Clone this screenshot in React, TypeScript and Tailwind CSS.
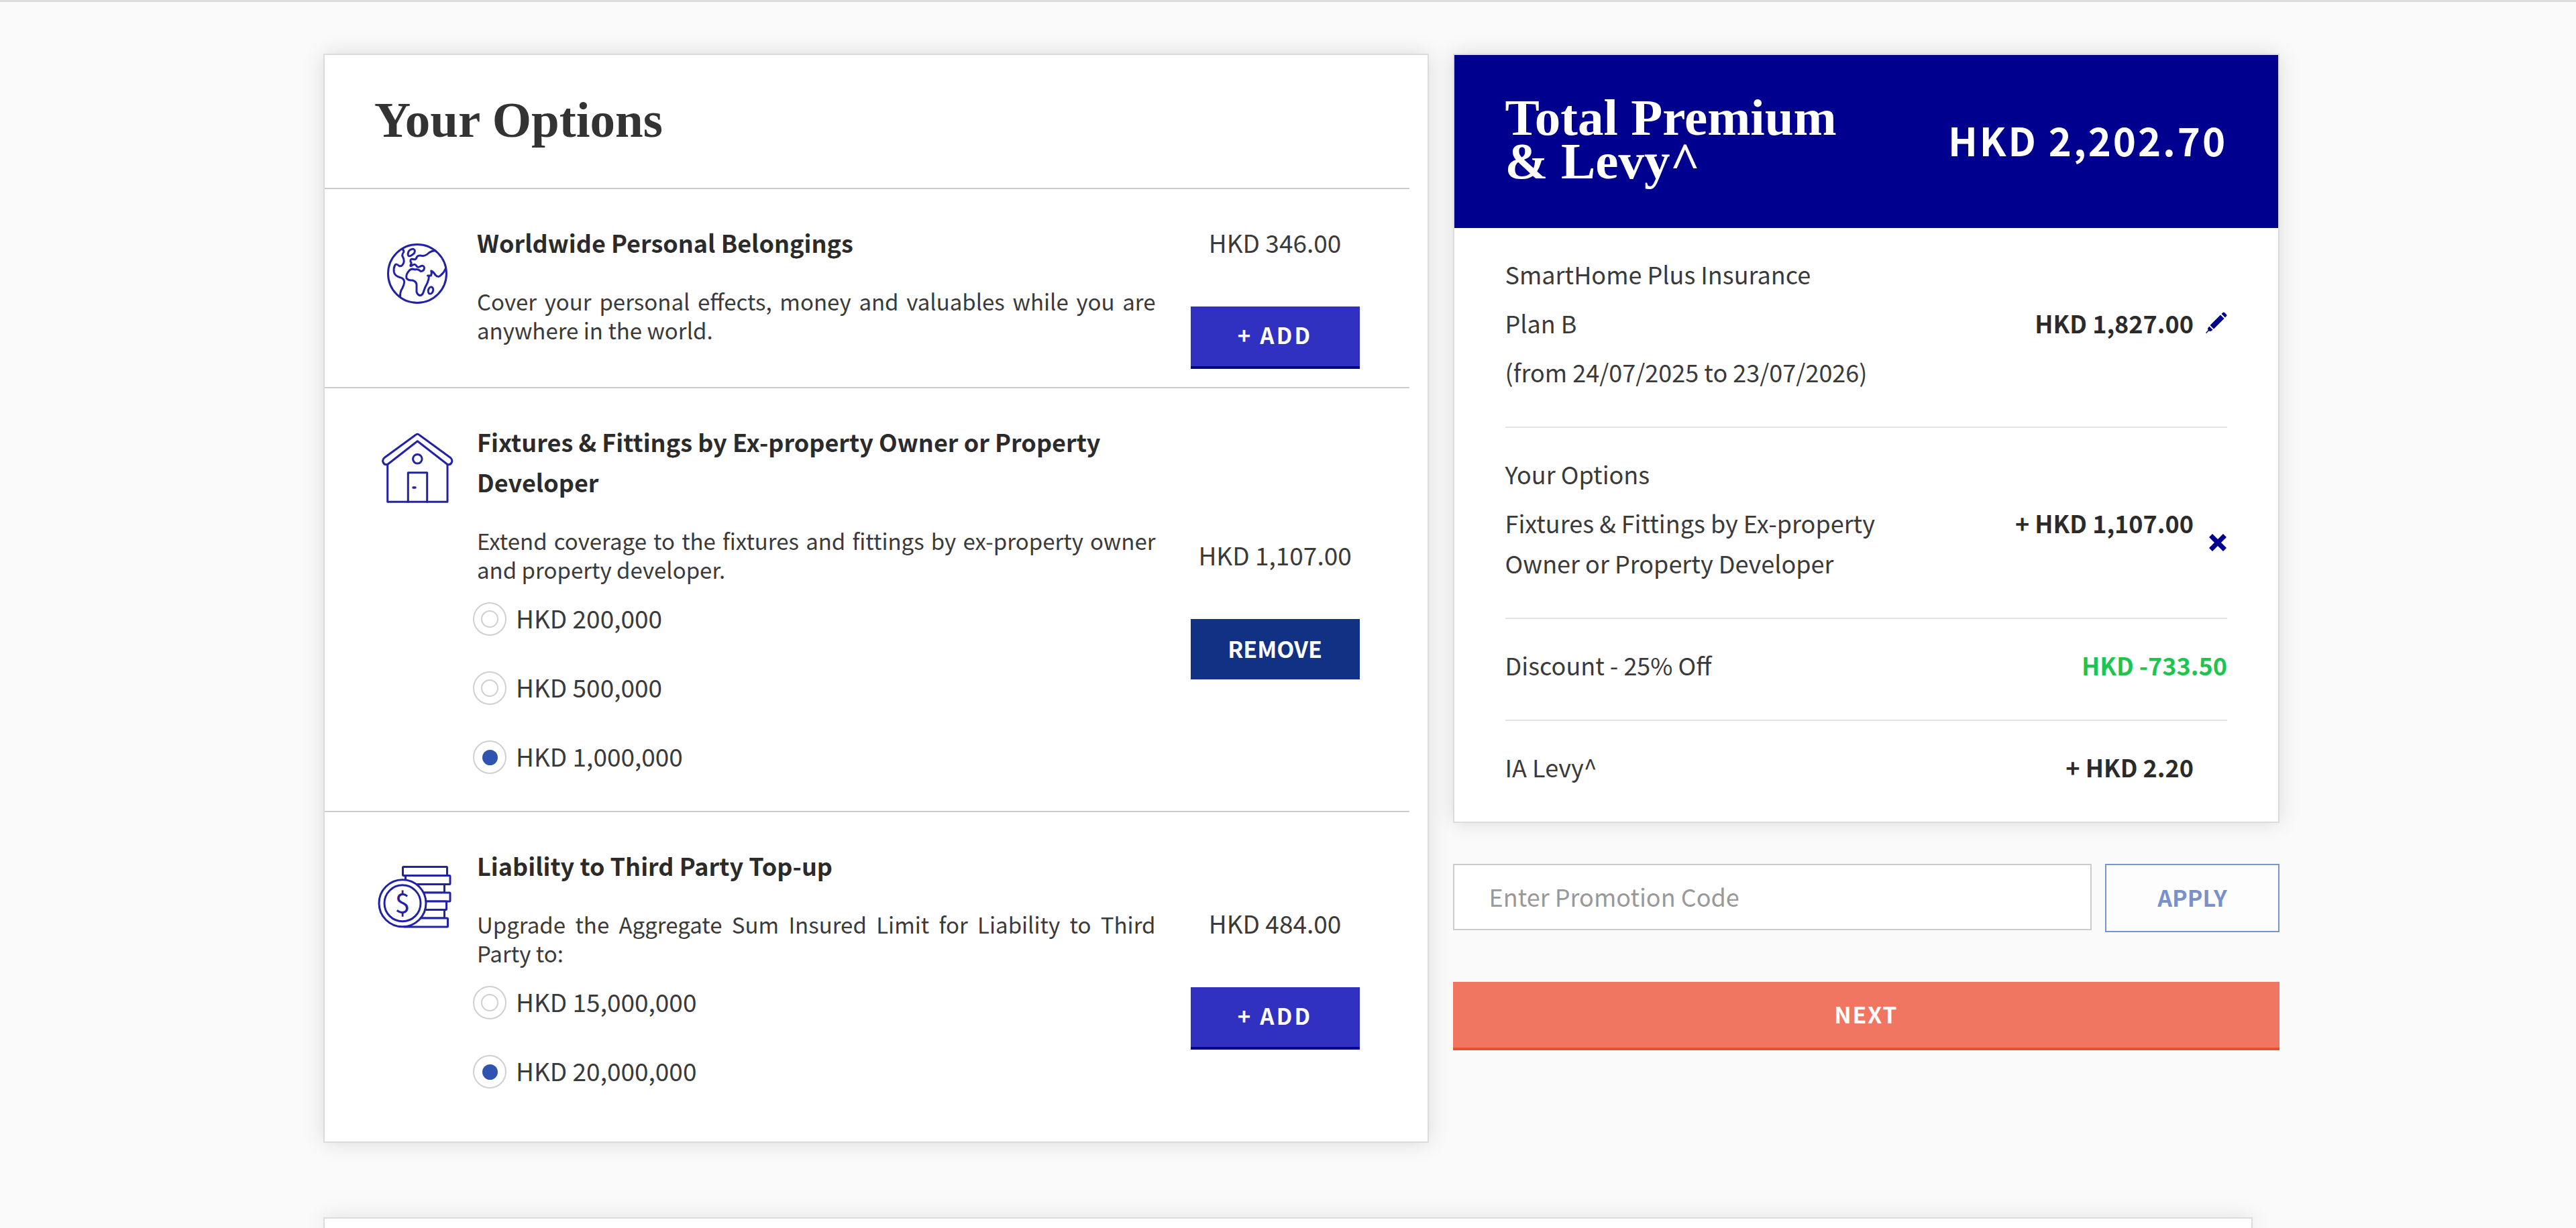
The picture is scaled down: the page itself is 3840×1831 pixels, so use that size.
import { useState, type ReactNode } from 'react'

function GlobeIcon() {
  return (
    <svg viewBox="0 0 120 120" className="w-[120px] h-[120px]" fill="none" stroke="#2222a8" strokeWidth="3" strokeLinejoin="round" strokeLinecap="round" aria-hidden="true">
      <circle cx="62" cy="60" r="43.5" />
      <path d="M39.3 23.7Q43.5 25.5 41 29Q38.5 32.5 41 36Q43 41 41.5 44.5Q39 50 35 48.5Q30 44 28.5 48Q26.5 52 27.3 57.5Q28.5 63.5 36 65.5Q42.5 67 42.7 72.3Q42.5 76.5 40 81.3Q36 87 36.7 94" />
      <path d="M48.3 32.5Q47.5 27 51.5 24.5Q56.5 21.5 58.3 25.3Q59 29.5 54.5 32Q49.5 35.5 48.3 32.5Z" />
      <path d="M89 25.7Q84 25.5 80 28.5Q74 34 70 33.5Q63.5 32 61.5 35Q60 40 56 38.5Q51 37.5 52 42Q54 44 52.3 46.5Q50.5 50 54 48Q58.5 44.5 60.5 48Q62 51.5 66 49.5Q71.5 46.5 72.5 51Q72.5 56.5 67.3 56.5Q62.5 52.5 58.5 54Q53 51.5 49.5 56Q44.5 62 46 67Q49 70.5 55 70Q60.5 71.5 61 76.5V87Q62.5 92.5 66.5 92.5Q70 92 71.5 86.5Q73.5 80 77 74Q79.5 69 79.5 63H77.5H82.5Q84 59 82.7 56Q86.5 57.5 89 62Q93 66.5 97 62.5Q102 58.5 104.5 52" />
      <ellipse cx="82" cy="85" rx="3.6" ry="5.2" transform="rotate(15 82 85)" />
    </svg>
  )
}

function HouseIcon() {
  return (
    <svg viewBox="0 0 120 120" className="w-[120px] h-[120px]" fill="none" stroke="#2222a8" strokeWidth="3" strokeLinejoin="round" strokeLinecap="round" aria-hidden="true">
      <path d="M59.5 3.5Q62.3 1 65 3.5L111.5 37.5C116.5 42 112.5 49 107 47.5L62.3 12.7L17.7 47.5C12 49 8 42 13 37.5Z" />
      <path d="M17.7 47.5V103.3H107V47.5" />
      <circle cx="62.3" cy="39.3" r="6.8" />
      <path d="M48.3 103.3V59.7H76.7V103.3" />
      <path d="M56 82H59" strokeWidth="3.4" />
    </svg>
  )
}

function CoinsIcon() {
  return (
    <svg viewBox="0 0 120 120" className="w-[120px] h-[120px]" fill="#fff" stroke="#2222a8" strokeWidth="3" strokeLinejoin="round" aria-hidden="true">
      <rect x="40.5" y="15.5" width="66" height="13" rx="1" />
      <rect x="44.5" y="28.5" width="66.5" height="13" rx="1" />
      <rect x="50" y="41.5" width="52.5" height="12.5" />
      <rect x="50" y="54" width="61" height="13" rx="1" />
      <rect x="50" y="67" width="55.5" height="12.5" rx="1" />
      <rect x="50" y="79.5" width="52.5" height="12.5" />
      <rect x="42" y="92" width="65.5" height="13" rx="1" />
      <circle cx="40" cy="69.8" r="35" />
      <circle cx="40" cy="69.8" r="27" />
      <text x="40" y="84" textAnchor="middle" fontSize="41" fontFamily="'Noto Sans CJK SC', sans-serif" fill="#2222a8" stroke="none">$</text>
    </svg>
  )
}

function PencilIcon() {
  return (
    <svg viewBox="0 0 32 32" className="w-8 h-8" fill="#00008f" aria-hidden="true">
      <path d="M23.5 3L26 .8Q27 0 28 1L31.2 4.2Q32 5 31.2 6L29 8.5Z" />
      <path d="M22 4.5L27.5 10L12 25.5L6.5 20Z" />
      <path d="M5.3 21.5L10.5 26.7L7.5 29L4.5 28.5L1 32L0 31L3.5 27.5L3 24.5Z" />
    </svg>
  )
}

function CrossIcon() {
  return (
    <svg viewBox="0 0 28 28" className="w-7 h-7" fill="#00008f" aria-hidden="true">
      <path d="M6 1L14 9L22 1L27 6L19 14L27 22L22 27L14 19L6 27L1 22L9 14L1 6Z" />
    </svg>
  )
}

type OptionRowProps = {
  icon: ReactNode
  title: string
  description: string
  price: string
  added?: boolean
  last?: boolean
  choices?: string[]
  initial?: string
}

function OptionRow({ icon, title, description, price, added, last, choices, initial }: OptionRowProps) {
  const [selected, setSelected] = useState(initial)

  return (
    <section className={`mr-[27px] pl-[76px] pr-[74px] pt-[49px] flex items-center ${last ? 'pb-[51px]' : 'pb-[27px] border-b-2 border-[#cccccc]'}`}>
      <div className="self-start shrink-0 pt-[17px]">{icon}</div>
      <div className="self-start flex-1 min-w-0 ml-[31px] mr-[52px]">
        <h2 className="text-[36px] leading-[60px] font-bold text-[#2b2b2b]">{title}</h2>
        <p className="mt-[37px] text-[33px] leading-[43px] text-justify">{description}</p>
        {choices && (
          <div role="radiogroup" aria-label={title} className="mt-[27px] mb-7 -ml-[6px] flex flex-col gap-[53px]">
            {choices.map((choice) => (
              <label key={choice} className="h-[50px] flex items-center gap-3.5 text-[37px] leading-[50px]">
                <input
                  type="radio"
                  name={title}
                  checked={selected === choice}
                  onChange={() => setSelected(choice)}
                  className="appearance-none shrink-0 w-[50px] h-[50px] rounded-full border-2 border-[#d0d0d0] bg-white grid place-content-center before:block before:w-[26px] before:h-[26px] before:rounded-full before:border-2 before:border-[#d0d0d0] checked:before:w-[23px] checked:before:h-[23px] checked:before:border-0 checked:before:bg-[#2f54b0]"
                />
                <span className="pb-1">{choice}</span>
              </label>
            ))}
          </div>
        )}
      </div>
      <div className="w-[252px] shrink-0 text-center">
        <p className="text-[37px] leading-[60px]">{price}</p>
        {added ? (
          <button className="mt-[66px] w-full h-[90px] pb-1 bg-[#103184] text-white text-[34px] font-bold">REMOVE</button>
        ) : (
          <button className="mt-[66px] w-full h-[93px] pb-1 bg-[#3030c1] border-b-4 border-[#00008f] text-white text-[33px] font-bold tracking-widest">
            + ADD
          </button>
        )}
      </div>
    </section>
  )
}

function SummaryLine({ label, amount, action }: { label: string; amount: ReactNode; action?: ReactNode }) {
  return (
    <div className="flex items-center">
      <span className="flex-1 pr-[100px]">{label}</span>
      <span className="self-start font-bold text-[#2b2b2b]">{amount}</span>
      <span className="w-[50px] flex justify-end">{action}</span>
    </div>
  )
}

export default function App() {
  const [code, setCode] = useState('')

  return (
    <div className="min-h-screen flex flex-col bg-[#fafafa] border-t-3 border-[#dcdcdc] text-[#3a3a3a] font-['Noto_Sans_CJK_SC','Noto_Sans',sans-serif]">
      <main className="flex-1 flex flex-col w-full max-w-[2876px] mx-auto pt-[77px]">
        <div className="-mr-10 grid grid-cols-[1647fr_1232fr] gap-9 items-start">
          <div className="bg-white border-2 border-[#dcdcdc] shadow-[0_0_30px_rgba(0,0,0,0.13)]">
            <header className="mr-[27px] pl-[74px] pb-[6px] h-[200px] flex items-center border-b-2 border-[#cccccc]">
              <h1 className="text-[75px] leading-[65px] font-bold text-[#333] font-['Liberation_Serif',serif]">Your Options</h1>
            </header>
            <OptionRow
              icon={<GlobeIcon />}
              title="Worldwide Personal Belongings"
              description="Cover your personal effects, money and valuables while you are anywhere in the world."
              price="HKD 346.00"
            />
            <OptionRow
              icon={<HouseIcon />}
              title="Fixtures & Fittings by Ex-property Owner or Property Developer"
              description="Extend coverage to the fixtures and fittings by ex-property owner and property developer."
              price="HKD 1,107.00"
              added
              choices={['HKD 200,000', 'HKD 500,000', 'HKD 1,000,000']}
              initial="HKD 1,000,000"
            />
            <OptionRow
              icon={<CoinsIcon />}
              title="Liability to Third Party Top-up"
              description="Upgrade the Aggregate Sum Insured Limit for Liability to Third Party to:"
              price="HKD 484.00"
              last
              choices={['HKD 15,000,000', 'HKD 20,000,000']}
              initial="HKD 20,000,000"
            />
          </div>

          <aside>
            <div className="bg-white border-2 border-[#dcdcdc] shadow-[0_0_30px_rgba(0,0,0,0.13)]">
              <header className="h-[258px] px-[76px] pb-[6px] flex items-center justify-between bg-[#00008f] text-white">
                <h2 className="w-[540px] text-[77px] leading-[65px] font-bold font-['Liberation_Serif',serif]">
                  Total Premium &amp; Levy^
                </h2>
                <p className="text-[58px] leading-[65px] font-bold tracking-wider">HKD 2,202.70</p>
              </header>
              <div className="px-[76px] text-[36px] leading-[60px] divide-y-2 divide-[#e4e4e4]">
                <div className="pt-[38px] pb-[52px] flex flex-col gap-[13px]">
                  <p>SmartHome Plus Insurance</p>
                  <SummaryLine
                    label="Plan B"
                    amount="HKD 1,827.00"
                    action={
                      <button aria-label="Edit plan">
                        <PencilIcon />
                      </button>
                    }
                  />
                  <p>(from 24/07/2025 to 23/07/2026)</p>
                </div>
                <div className="pt-[38px] pb-[52px] flex flex-col gap-[13px]">
                  <p>Your Options</p>
                  <SummaryLine
                    label="Fixtures & Fittings by Ex-property Owner or Property Developer"
                    amount="+ HKD 1,107.00"
                    action={
                      <button aria-label="Remove option">
                        <CrossIcon />
                      </button>
                    }
                  />
                </div>
                <div className="pt-[38px] pb-[52px] flex justify-between">
                  <span>Discount - 25% Off</span>
                  <span className="font-bold text-[#1cc54e]">HKD -733.50</span>
                </div>
                <div className="pt-[38px] pb-[52px]">
                  <SummaryLine label="IA Levy^" amount="+ HKD 2.20" />
                </div>
              </div>
            </div>

            <form className="mt-[61px]" onSubmit={(e) => e.preventDefault()}>
              <div className="flex items-start gap-5">
                <input
                  type="text"
                  aria-label="Promotion code"
                  placeholder="Enter Promotion Code"
                  value={code}
                  onChange={(e) => setCode(e.target.value)}
                  className="flex-1 min-w-0 h-[99px] px-[52px] pb-1 bg-white border-2 border-[#cccccc] text-[36px] placeholder:text-[#999]"
                />
                <button type="button" className="w-[260px] h-[102px] pb-1 bg-[#fdfdfd] border-2 border-[#7a94d0] text-[#7a90cc] text-[34px] font-bold">
                  APPLY
                </button>
              </div>
              <button type="submit" className="mt-[74px] w-full h-[102px] pb-1 bg-[#f07662] border-b-4 border-[#ec4d33] text-white text-[34px] font-bold tracking-wider">
                NEXT
              </button>
            </form>
          </aside>
        </div>

        <div className="mt-[111px] flex-1 bg-white border-2 border-b-0 border-[#dcdcdc] shadow-[0_0_30px_rgba(0,0,0,0.13)]" />
      </main>
    </div>
  )
}
